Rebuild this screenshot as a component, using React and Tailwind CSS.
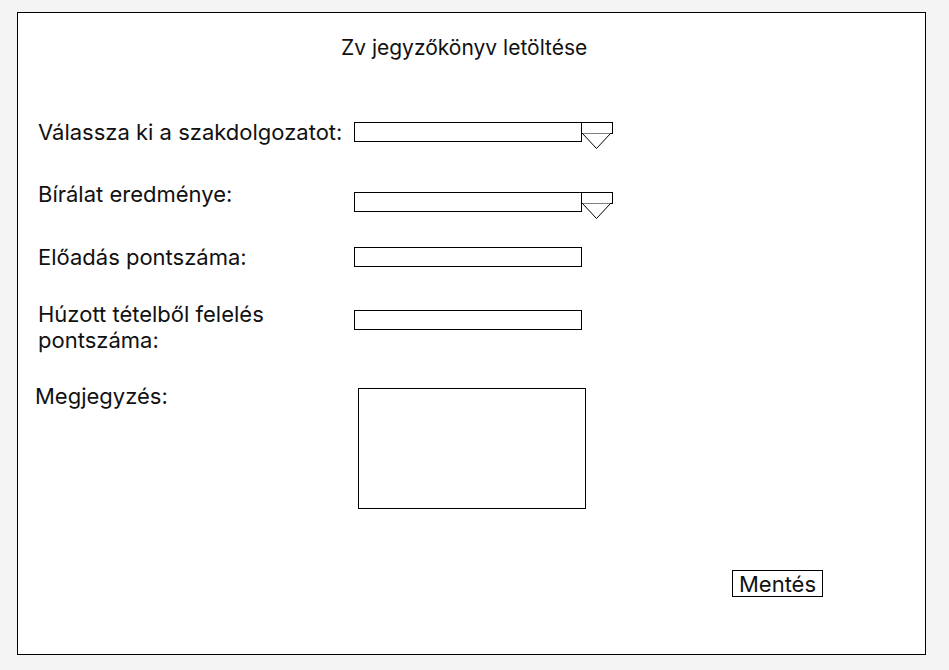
import React from 'react';

const font = { fontFamily: 'Inter, "Liberation Sans", sans-serif' };

function Select() {
  return (
    <div className="flex items-start">
      <div className="w-[228px] h-[20px] border border-black bg-white" />
      <div className="relative w-[31px] h-[12px] border border-black border-l-0 bg-white">
        <svg className="absolute left-[-1px] top-[10px]" width="31" height="17" viewBox="0 0 31 17">
          <path d="M1.5 0.5 L15.5 15.5 L29.5 0.5" fill="white" stroke="black" strokeWidth="1" />
        </svg>
      </div>
    </div>
  );
}

function Input() {
  return <div className="w-[228px] h-[20px] border border-black bg-white" />;
}

export default function App() {
  return (
    <div className="min-h-screen bg-[#f4f4f4] pt-[12px] pl-[17px]" style={font}>
      <div className="w-[909px] h-[643px] border border-black bg-white text-[#111]">
        <div className="pt-[23px] pl-[323px] text-[21px] leading-[24px]">Zv jegyzőkönyv letöltése</div>

        <div className="mt-[62px] flex items-start">
          <div className="w-[336px] pl-[20px] text-[22px] leading-[24px] -mt-[2px]">Válassza ki a szakdolgozatot:</div>
          <Select />
        </div>

        <div className="mt-[48px] flex items-start">
          <div className="w-[336px] pl-[20px] text-[22px] leading-[24px] -mt-[10px]">Bírálat eredménye:</div>
          <Select />
        </div>

        <div className="mt-[35px] flex items-start">
          <div className="w-[336px] pl-[20px] text-[22px] leading-[24px] -mt-[2px]">Előadás pontszáma:</div>
          <Input />
        </div>

        <div className="mt-[41px] flex items-start">
          <div className="w-[336px] pl-[20px] text-[22px] leading-[26px] -mt-[9px]">Húzott tételből felelés<br />pontszáma:</div>
          <Input />
        </div>

        <div className="mt-[35px] flex items-start">
          <div className="w-[340px] pl-[17px] text-[22px] leading-[24px] -mt-[4px]">Megjegyzés:</div>
          <div className="w-[228px] h-[121px] border border-black bg-white" />
        </div>

        <div className="mt-[61px] pl-[714px]">
          <button className="h-[27px] w-[91px] border border-black bg-white text-[22px] leading-[24px]">Mentés</button>
        </div>
      </div>
    </div>
  );
}
